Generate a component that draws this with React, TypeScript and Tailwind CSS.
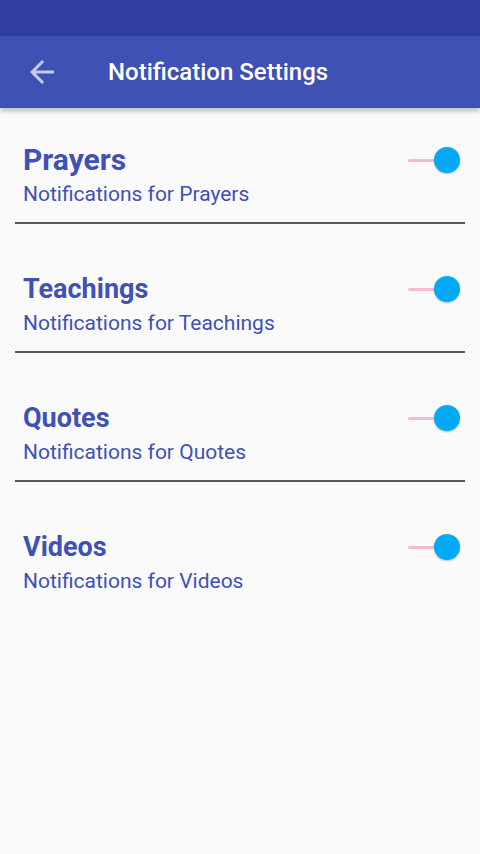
import React from 'react';

const items = [
  { name: 'Prayers', size: 'text-[30px]' },
  { name: 'Teachings', size: 'text-[27px]' },
  { name: 'Quotes', size: 'text-[27px]' },
  { name: 'Videos', size: 'text-[27px]' },
];

function Toggle() {
  return (
    <div className="relative mt-[3px] h-[26px] w-[52px] shrink-0">
      <div className="absolute left-0 right-[13px] top-[11.5px] h-[3px] rounded-full bg-[#f5bccb]" />
      <div className="absolute right-0 top-0 h-[26px] w-[26px] rounded-full bg-[#03a9f4] shadow-[0_1px_2px_rgba(0,0,0,0.25)]" />
    </div>
  );
}

export default function App() {
  return (
    <div className="flex h-[854px] w-[480px] flex-col bg-[#fafafa] font-['Roboto',sans-serif]">
      {/* status bar */}
      <div className="h-[36px] w-full bg-[#303f9f]" />

      {/* app bar */}
      <div className="relative z-10 flex h-[72px] items-center bg-[#3f51b5] shadow-[0_3px_5px_rgba(0,0,0,0.25)]">
        <div className="flex w-[108px] pl-[24px]">
          <svg width="36" height="36" viewBox="0 0 24 24" fill="#c5cae9">
            <path d="M20 11H7.83l5.59-5.59L12 4l-8 8 8 8 1.41-1.41L7.83 13H20v-2z" />
          </svg>
        </div>
        <h1 className="text-[24px] font-medium text-white">Notification Settings</h1>
      </div>

      {/* settings list */}
      <div className="pt-[36px]">
        {items.map((item, i) => (
          <div key={item.name}>
            <div className={`flex items-start justify-between pl-[23px] pr-[20px] ${i > 0 ? 'pt-[49px]' : ''}`}>
              <div>
                <div className={`${item.size} font-bold leading-[32px] text-[#3f51b5]`}>{item.name}</div>
                <div className="mt-[5px] text-[21px] leading-[26px] text-[#3f51b5]">
                  Notifications for {item.name}
                </div>
              </div>
              <Toggle />
            </div>
            {i < items.length - 1 && <div className="mx-[15px] mt-[15px] h-[2px] bg-[#5a5a5a]" />}
          </div>
        ))}
      </div>
    </div>
  );
}
